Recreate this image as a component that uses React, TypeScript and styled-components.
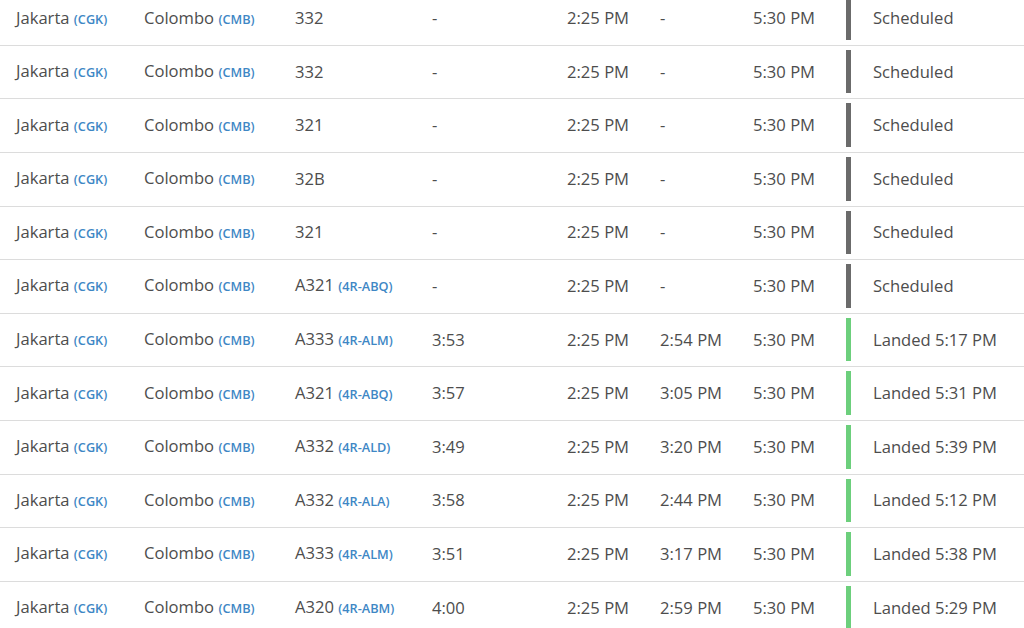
import React from "react";
import styled, { createGlobalStyle } from "styled-components";

const GlobalStyle = createGlobalStyle`
  html, body {
    margin: 0;
    padding: 0;
    background: #ffffff;
    overflow: hidden;
  }
  body {
    font-family: "Open Sans", "Noto Sans", sans-serif;
    color: #4d4d4d;
  }
`;

type Flight = {
  aircraft: string;
  reg?: string;
  duration: string;
  actualDep: string;
  status: string;
  landed: boolean;
};

const flights: Flight[] = [
  { aircraft: "332", duration: "-", actualDep: "-", status: "Scheduled", landed: false },
  { aircraft: "332", duration: "-", actualDep: "-", status: "Scheduled", landed: false },
  { aircraft: "321", duration: "-", actualDep: "-", status: "Scheduled", landed: false },
  { aircraft: "32B", duration: "-", actualDep: "-", status: "Scheduled", landed: false },
  { aircraft: "321", duration: "-", actualDep: "-", status: "Scheduled", landed: false },
  { aircraft: "A321", reg: "4R-ABQ", duration: "-", actualDep: "-", status: "Scheduled", landed: false },
  { aircraft: "A333", reg: "4R-ALM", duration: "3:53", actualDep: "2:54 PM", status: "Landed 5:17 PM", landed: true },
  { aircraft: "A321", reg: "4R-ABQ", duration: "3:57", actualDep: "3:05 PM", status: "Landed 5:31 PM", landed: true },
  { aircraft: "A332", reg: "4R-ALD", duration: "3:49", actualDep: "3:20 PM", status: "Landed 5:39 PM", landed: true },
  { aircraft: "A332", reg: "4R-ALA", duration: "3:58", actualDep: "2:44 PM", status: "Landed 5:12 PM", landed: true },
  { aircraft: "A333", reg: "4R-ALM", duration: "3:51", actualDep: "3:17 PM", status: "Landed 5:38 PM", landed: true },
  { aircraft: "A320", reg: "4R-ABM", duration: "4:00", actualDep: "2:59 PM", status: "Landed 5:29 PM", landed: true },
];

const Table = styled.div`
  width: 1024px;
  margin-top: -7.8px;
`;

const Row = styled.div`
  display: grid;
  grid-template-columns: 128px 151px 137px 135px 93px 93px 109px 1fr;
  height: 53.6px;
  box-sizing: border-box;
  border-bottom: 1px solid #dcdcdc;
`;

const Cell = styled.div`
  display: flex;
  align-items: center;
  padding-left: 16px;
  padding-bottom: 1px;
  font-size: 16.6px;
  line-height: 22px;
  white-space: nowrap;
`;

const CellText = styled.span`
  display: inline;
`;

const Code = styled.span`
  font-size: 12.7px;
  font-weight: 600;
  color: #3e87c5;
`;

const StatusCell = styled.div`
  display: flex;
  align-items: stretch;
  font-size: 16.6px;
  white-space: nowrap;
`;

const StatusBar = styled.div<{ $landed: boolean }>`
  width: 5px;
  margin: 4px 0 5px 0;
  background: ${(p) => (p.$landed ? "#6ccf7c" : "#6b6b6b")};
`;

const StatusText = styled.div`
  display: flex;
  align-items: center;
  padding-left: 22px;
  padding-bottom: 1px;
  line-height: 22px;
`;

export default function App() {
  return (
    <>
      <GlobalStyle />
      <Table>
        {flights.map((f, i) => (
          <Row key={i}>
            <Cell>
              <CellText>
                Jakarta <Code>(CGK)</Code>
              </CellText>
            </Cell>
            <Cell>
              <CellText>
                Colombo <Code>(CMB)</Code>
              </CellText>
            </Cell>
            <Cell>
              <CellText>
                {f.aircraft}
                {f.reg && (
                  <>
                    {" "}
                    <Code>({f.reg})</Code>
                  </>
                )}
              </CellText>
            </Cell>
            <Cell>{f.duration}</Cell>
            <Cell>2:25 PM</Cell>
            <Cell>{f.actualDep}</Cell>
            <Cell>5:30 PM</Cell>
            <StatusCell>
              <StatusBar $landed={f.landed} />
              <StatusText>{f.status}</StatusText>
            </StatusCell>
          </Row>
        ))}
      </Table>
    </>
  );
}
